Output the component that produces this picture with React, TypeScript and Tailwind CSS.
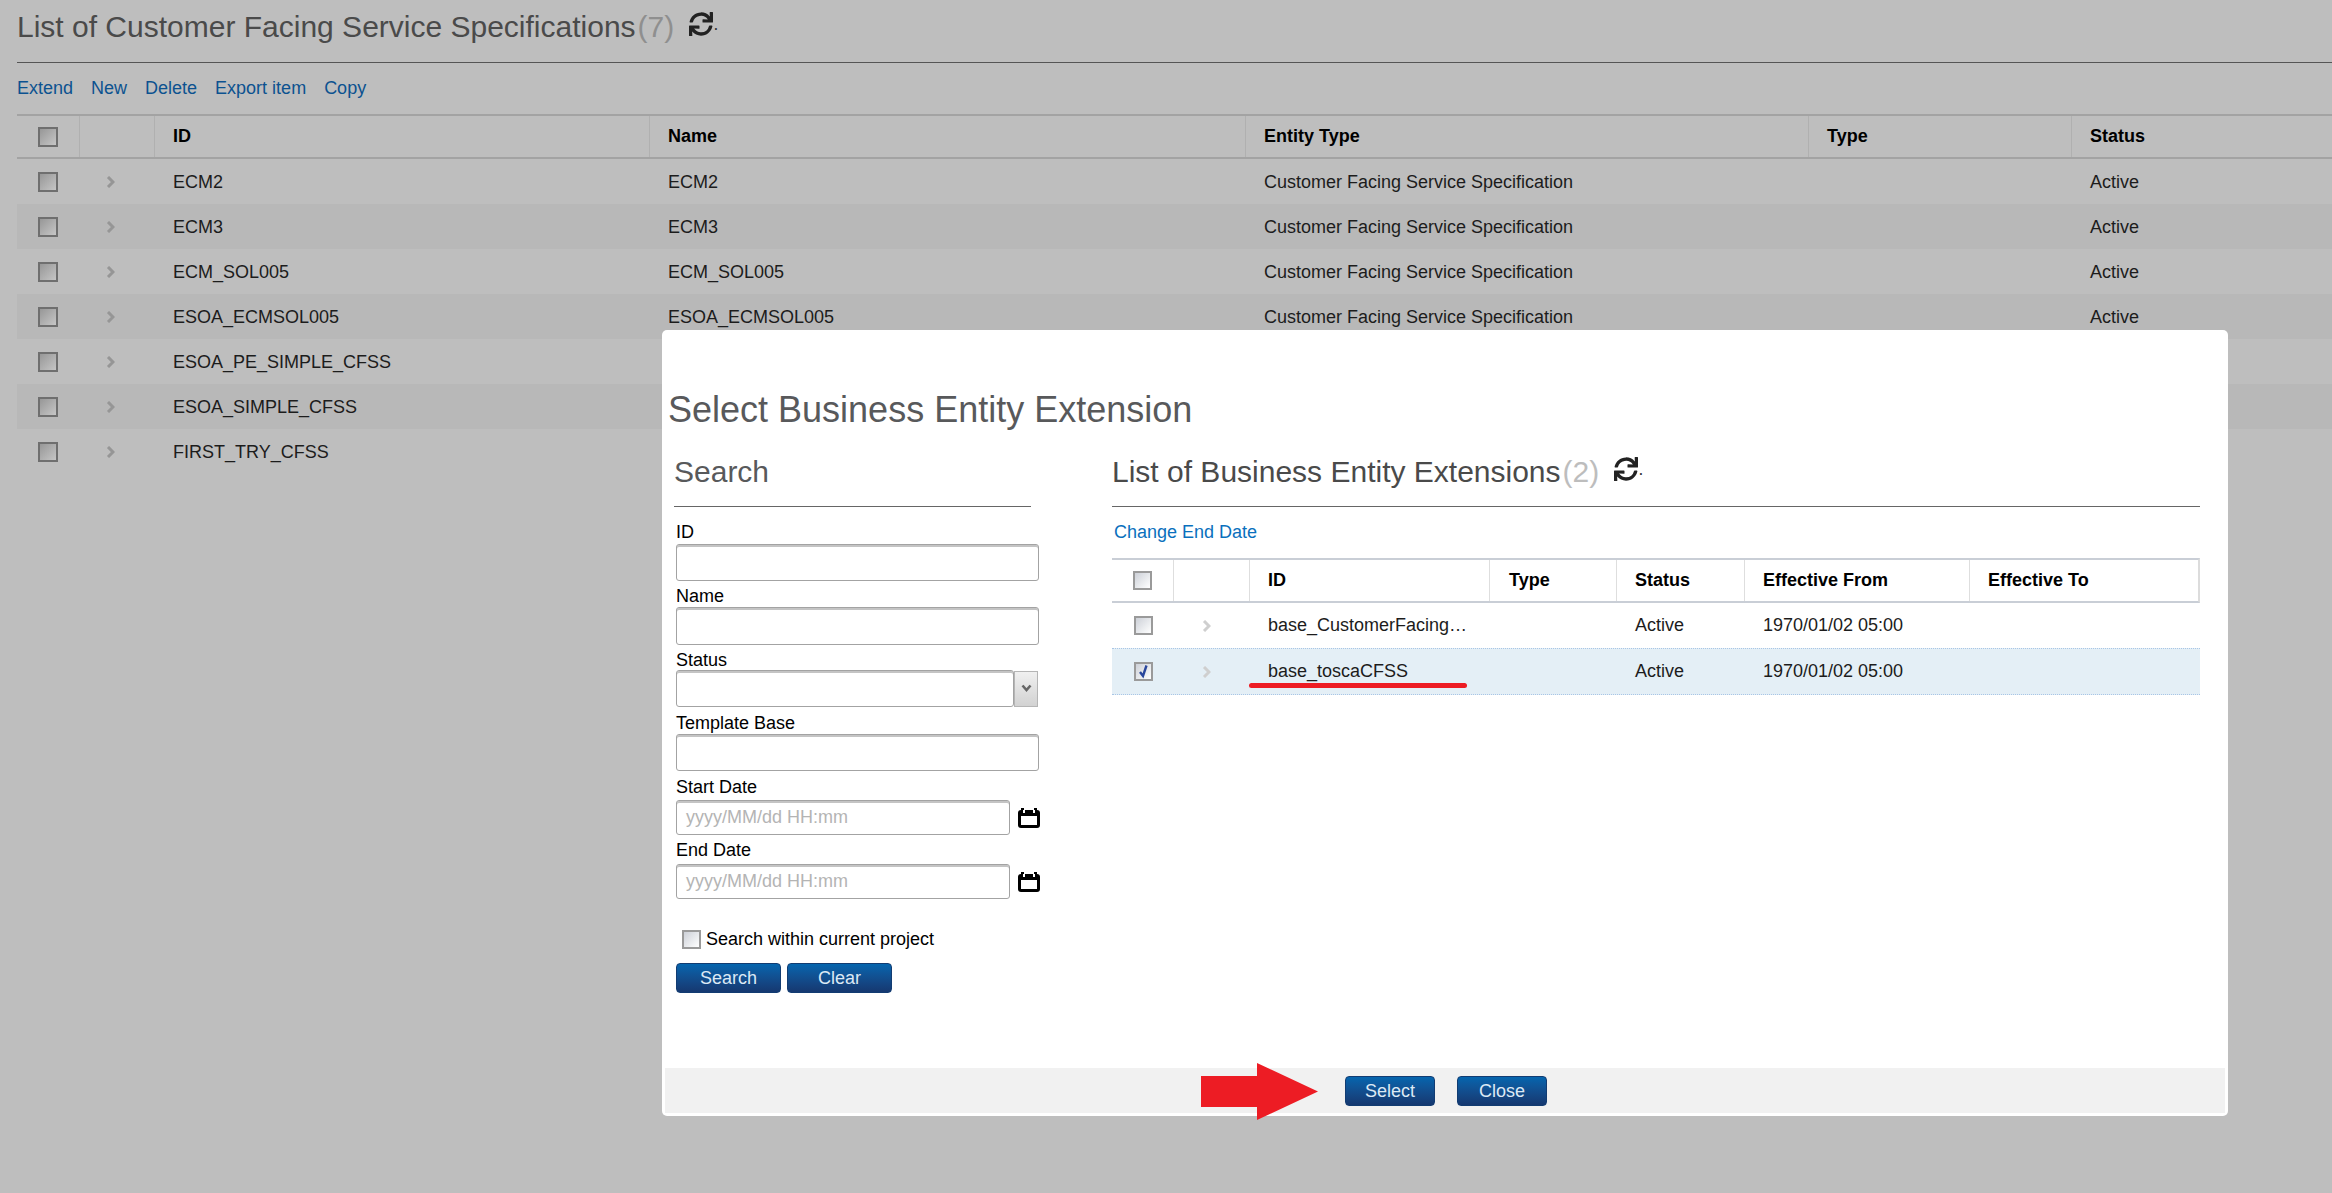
import React from "react";
import { FaSync } from "react-icons/fa";

const mainRows = ["ECM2", "ECM3", "ECM_SOL005", "ESOA_ECMSOL005", "ESOA_PE_SIMPLE_CFSS", "ESOA_SIMPLE_CFSS", "FIRST_TRY_CFSS"];
const mainGrid = "grid grid-cols-[63px_75px_495px_596px_563px_263px_1fr]";
const subGrid = "grid grid-cols-[62px_76px_240px_127px_128px_225px_1fr]";

function Check({ checked, dim }: { checked?: boolean; dim?: boolean }) {
  return (
    <span
      className={
        dim
          ? "relative block h-[20px] w-[20px] border-2 border-[#6f6f6f] bg-gradient-to-br from-[#979797] to-[#c6c6c6]"
          : "relative block h-[19px] w-[19px] border-2 border-[#9a9a9a] bg-gradient-to-br from-[#cdd1d8] to-[#ffffff]"
      }
    >
      {checked && (
        <svg viewBox="0 0 15 15" className="absolute left-0 top-0 h-[15px] w-[15px]">
          <path d="M4 8 L7 12 L10.5 1.5" fill="none" stroke="#2a479c" strokeWidth="2.4" />
        </svg>
      )}
    </span>
  );
}

function Chevron({ color }: { color: string }) {
  return (
    <svg width="9" height="12" viewBox="0 0 9 12">
      <path d="M2 1 L7 6 L2 11" fill="none" stroke={color} strokeWidth="3" />
    </svg>
  );
}

function Calendar() {
  return (
    <svg width="22" height="20" viewBox="0 0 22 20" className="block">
      <rect x="0" y="2" width="22" height="18" rx="3" fill="#000" />
      <rect x="3" y="8" width="16" height="9" fill="#fff" />
      <path d="M3 0h3v2H3zM16 0h3v2h-3z" fill="#000" />
      <path d="M5 2h2v3H5zM15 2h2v3h-2z" fill="#fff" />
    </svg>
  );
}

function Btn({ label, w }: { label: string; w: string }) {
  return (
    <button className={`${w} h-[30px] rounded-[4px] border border-[#123c72] bg-gradient-to-b from-[#0465ae] to-[#153870] text-[18px] leading-[28px] text-[#dce9f5]`}>
      {label}
    </button>
  );
}

const inputCls = "block rounded-[3px] border border-[#a3a3a3] bg-white shadow-[inset_0_2px_0_#c4c4c4]";
const labelCls = "h-[22px] text-[18px] leading-[22px] text-black";

function Heading({ title, count, sub }: { title: string; count: string; sub?: boolean }) {
  return (
    <div className="flex items-center">
      <span className="text-[30px] leading-[40px] text-[#4a4a4a]">{title}</span>
      <span className={sub ? "ml-[2px] text-[30px] leading-[40px] text-[#bdbdbd]" : "ml-[2px] text-[30px] leading-[40px] text-[#8f8f8f]"}>{count}</span>
      <FaSync className="ml-[15px] mb-[6px] text-[24px] text-[#222]" />
      <span className="mb-[2px] ml-[1px] text-[12px] font-bold text-[#333]">.</span>
    </div>
  );
}

export default function App() {
  return (
    <div className="relative h-[1193px] w-[2332px] overflow-hidden bg-[#bebebe] font-['Liberation_Sans',Arial,sans-serif]">
      {/* page behind the dialog */}
      <div className="pl-[17px]">
        <div className="h-[63px] border-b border-[#555] pt-[7px]">
          <Heading title="List of Customer Facing Service Specifications" count="(7)" />
        </div>
        <div className="flex h-[51px] items-center gap-[18px] text-[18px] text-[#0c5290]">
          {["Extend", "New", "Delete", "Export item", "Copy"].map((t) => (
            <span key={t}>{t}</span>
          ))}
        </div>
        <div className={`${mainGrid} h-[45px] items-center border-y-2 border-[#a3a3a3] text-[18px] font-bold text-black`}>
          <div className="flex h-full items-center border-r border-[#b0b0b0] pl-[21px]"><Check dim /></div>
          <div className="h-full border-r border-[#b0b0b0]" />
          <div className="flex h-full items-center border-r border-[#b0b0b0] pl-[18px]">ID</div>
          <div className="flex h-full items-center border-r border-[#b0b0b0] pl-[18px]">Name</div>
          <div className="flex h-full items-center border-r border-[#b0b0b0] pl-[18px]">Entity Type</div>
          <div className="flex h-full items-center border-r border-[#b0b0b0] pl-[18px]">Type</div>
          <div className="flex h-full items-center pl-[18px]">Status</div>
        </div>
        {mainRows.map((id, i) => (
          <div key={id} className={`${mainGrid} h-[45px] items-center pt-[1px] text-[18px] text-[#1c1c1c] ${i % 2 === 1 ? "bg-[#b8b8b8]" : ""}`}>
            <div className="pl-[21px]"><Check dim /></div>
            <div className="pl-[26px]"><Chevron color="#969696" /></div>
            <div className="pl-[18px]">{id}</div>
            {i < 4 && (
              <>
                <div className="pl-[18px]">{id}</div>
                <div className="pl-[18px]">Customer Facing Service Specification</div>
                <div />
                <div className="pl-[18px]">Active</div>
              </>
            )}
          </div>
        ))}
      </div>

      {/* dialog */}
      <div className="absolute left-[662px] top-[330px] flex h-[786px] w-[1566px] flex-col rounded-[5px] bg-white">
        <div className="mt-[60px] h-[40px] pl-[6px] text-[36px] leading-[40px] text-[#58595b]">Select Business Entity Extension</div>
        <div className="mt-[1px] flex flex-1 pl-[12px]">
          <div className="w-[357px] shrink-0">
            <div className="h-[76px] border-b border-[#666] pt-[21px] text-[30px] leading-[40px] text-[#58595b]">Search</div>
            <div className="w-[366px] pl-[2px] pt-[14px]">
              <div className={labelCls}>ID</div>
              <div className={`${inputCls} mt-[1px] h-[37px] w-[363px]`} />
              <div className={`${labelCls} mt-[4px]`}>Name</div>
              <div className={`${inputCls} h-[38px] w-[363px]`} />
              <div className={`${labelCls} mt-[4px]`}>Status</div>
              <div className="-mt-[1px] flex items-center">
                <div className={`${inputCls} h-[37px] w-[338px]`} />
                <div className="flex h-[36px] w-[24px] items-center justify-center border border-[#b5b5b5] bg-gradient-to-b from-[#f0f0f0] to-[#d2d2d2]">
                  <svg width="11" height="9" viewBox="0 0 11 9"><path d="M1.5 1.5 L5.5 6 L9.5 1.5" fill="none" stroke="#666" strokeWidth="2.6" /></svg>
                </div>
              </div>
              <div className={`${labelCls} mt-[5px]`}>Template Base</div>
              <div className={`${inputCls} h-[37px] w-[363px]`} />
              <div className={`${labelCls} mt-[5px]`}>Start Date</div>
              <div className="mt-[2px] flex items-center">
                <div className={`${inputCls} flex h-[35px] w-[335px] items-center pl-[9px] text-[18px] text-[#b4b4b4]`}>yyyy/MM/dd HH:mm</div>
                <span className="ml-[8px]"><Calendar /></span>
              </div>
              <div className={`${labelCls} mt-[4px]`}>End Date</div>
              <div className="mt-[3px] flex items-center">
                <div className={`${inputCls} flex h-[35px] w-[335px] items-center pl-[9px] text-[18px] text-[#b4b4b4]`}>yyyy/MM/dd HH:mm</div>
                <span className="ml-[8px]"><Calendar /></span>
              </div>
              <div className="mt-[30px] flex h-[20px] items-center pl-[6px] text-[18px] text-black">
                <Check />
                <span className="ml-[5px]">Search within current project</span>
              </div>
              <div className="mt-[14px] flex gap-[6px]">
                <Btn label="Search" w="w-[105px]" />
                <Btn label="Clear" w="w-[105px]" />
              </div>
            </div>
          </div>
          <div className="ml-[81px] w-[1088px]">
            <div className="h-[76px] border-b border-[#666] pt-[21px]">
              <Heading title="List of Business Entity Extensions" count="(2)" sub />
            </div>
            <div className="flex h-[51px] items-center pl-[2px] text-[18px] text-[#0a70bd]">Change End Date</div>
            <div className={`${subGrid} h-[45px] items-center border-y-2 border-r-2 border-y-[#c9ced6] border-r-[#dcdcdc] text-[18px] font-bold text-black`}>
              <div className="flex h-full items-center border-r border-[#dedede] pl-[21px]"><Check /></div>
              <div className="h-full border-r border-[#dedede]" />
              <div className="flex h-full items-center border-r border-[#dedede] pl-[18px]">ID</div>
              <div className="flex h-full items-center border-r border-[#dedede] pl-[19px]">Type</div>
              <div className="flex h-full items-center border-r border-[#dedede] pl-[18px]">Status</div>
              <div className="flex h-full items-center border-r border-[#dedede] pl-[18px]">Effective From</div>
              <div className="flex h-full items-center pl-[18px]">Effective To</div>
            </div>
            <div className={`${subGrid} h-[45px] items-center text-[18px] text-[#1c1c1c]`}>
              <div className="pl-[22px]"><Check /></div>
              <div className="pl-[28px]"><Chevron color="#cfcfcf" /></div>
              <div className="pl-[18px]">base_CustomerFacing…</div>
              <div />
              <div className="pl-[18px]">Active</div>
              <div className="pl-[18px]">1970/01/02 05:00</div>
              <div />
            </div>
            <div className={`${subGrid} h-[47px] items-center border-y border-dotted border-[#a9c6e6] bg-[#e4eff6] text-[18px] text-[#1c1c1c]`}>
              <div className="pl-[22px]"><Check checked /></div>
              <div className="pl-[28px]"><Chevron color="#cfcfcf" /></div>
              <div className="pl-[18px]">base_toscaCFSS</div>
              <div />
              <div className="pl-[18px]">Active</div>
              <div className="pl-[18px]">1970/01/02 05:00</div>
              <div />
            </div>
          </div>
        </div>
        <div className="mx-[3px] mb-[3px] flex h-[45px] items-center justify-center gap-[22px] bg-[#f1f1f1] pl-[2px]">
          <Btn label="Select" w="w-[90px]" />
          <Btn label="Close" w="w-[90px]" />
        </div>
      </div>

      {/* annotations drawn on top of the screenshot */}
      <div className="absolute left-[1249px] top-[683px] h-[5px] w-[218px] rounded-full bg-[#ed1c24]" />
      <svg className="absolute left-[1201px] top-[1062px]" width="118" height="59" viewBox="0 0 118 59">
        <path d="M0 14 H56 V1 L117 29.5 L56 58 V45 H0 Z" fill="#ed1c24" />
      </svg>
    </div>
  );
}
